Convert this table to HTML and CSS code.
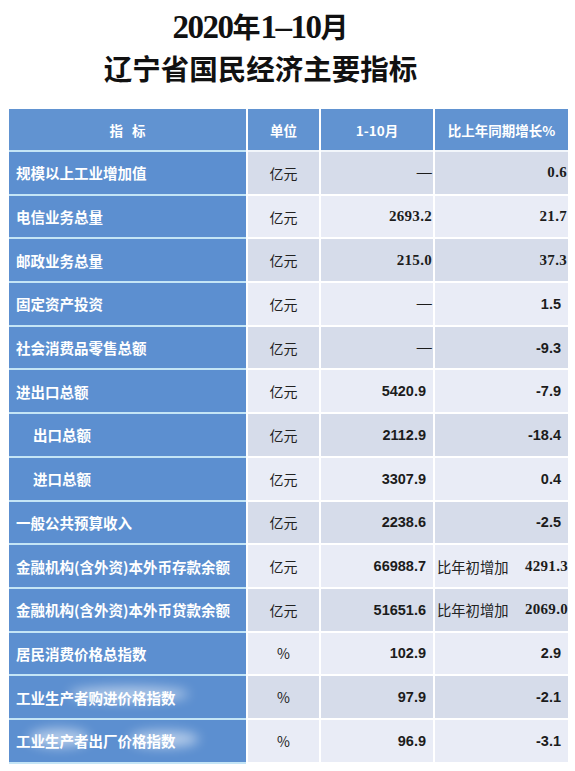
FILE: index.html
```html
<!DOCTYPE html>
<html lang="zh-CN">
<head>
<meta charset="utf-8">
<title>2020年1-10月辽宁省国民经济主要指标</title>
<link rel="stylesheet" href="styles.css">
</head>
<body>
<h1 class="title"><span class="t1"><span class="num">2020</span>年<span class="num">1–10</span>月</span><span class="t2">辽宁省国民经济主要指标</span></h1>
<div class="table">
  <div class="hd">指&nbsp;&nbsp;&nbsp;标</div><div class="hd">单位</div><div class="hd">1-10月</div><div class="hd">比上年同期增长%</div>

  <div class="name">规模以上工业增加值</div><div class="unit dk">亿元</div><div class="v dk serif">—</div><div class="g dk serif">0.6</div>
  <div class="name">电信业务总量</div><div class="unit lt">亿元</div><div class="v lt serif">2693.2</div><div class="g lt serif">21.7</div>
  <div class="name">邮政业务总量</div><div class="unit dk">亿元</div><div class="v dk serif">215.0</div><div class="g dk serif">37.3</div>
  <div class="name">固定资产投资</div><div class="unit lt">亿元</div><div class="v lt serif">—</div><div class="g lt">1.5</div>
  <div class="name">社会消费品零售总额</div><div class="unit dk">亿元</div><div class="v dk serif">—</div><div class="g dk">-9.3</div>
  <div class="name">进出口总额</div><div class="unit lt">亿元</div><div class="v lt">5420.9</div><div class="g lt">-7.9</div>
  <div class="name sub">出口总额</div><div class="unit dk">亿元</div><div class="v dk">2112.9</div><div class="g dk">-18.4</div>
  <div class="name sub">进口总额</div><div class="unit lt">亿元</div><div class="v lt">3307.9</div><div class="g lt">0.4</div>
  <div class="name">一般公共预算收入</div><div class="unit dk">亿元</div><div class="v dk">2238.6</div><div class="g dk">-2.5</div>
  <div class="name">金融机构(含外资)本外币存款余额</div><div class="unit lt">亿元</div><div class="v lt">66988.7</div><div class="g lt split"><span class="lbl">比年初增加</span><span class="serifnum">4291.3</span></div>
  <div class="name">金融机构(含外资)本外币贷款余额</div><div class="unit dk">亿元</div><div class="v dk">51651.6</div><div class="g dk split"><span class="lbl">比年初增加</span><span class="serifnum">2069.0</span></div>
  <div class="name">居民消费价格总指数</div><div class="unit lt">%</div><div class="v lt">102.9</div><div class="g lt">2.9</div>
  <div class="name">工业生产者购进价格指数</div><div class="unit dk">%</div><div class="v dk">97.9</div><div class="g dk">-2.1</div>
  <div class="name">工业生产者出厂价格指数</div><div class="unit lt">%</div><div class="v lt">96.9</div><div class="g lt">-3.1</div>

  <div class="smudge s1"></div>
  <div class="smudge s2"></div>
  <div class="smudge s3"></div>
</div>
</body>
</html>
```
FILE: styles.css
```css
html, body {
  margin: 0;
  padding: 0;
  background: #ffffff;
}
body {
  width: 575px;
  height: 771px;
  overflow: hidden;
  font-family: "Noto Sans CJK SC", "Liberation Sans", sans-serif;
}
.title {
  margin: 0;
  padding: 6px 54px 0 0;
  text-align: center;
  font-weight: 700;
  color: #111;
}
.title .t1,
.title .t2 {
  display: block;
  height: 41px;
  line-height: 41px;
}
.title .t1 {
  font-size: 28px;
  font-family: "Noto Sans CJK SC", sans-serif;
}
.title .t1 .num {
  font-family: "Liberation Serif", serif;
  font-size: 33px;
  letter-spacing: -1.5px;
}
.title .t2 {
  font-size: 28.5px;
  font-family: "Noto Sans CJK SC", sans-serif;
}
.table {
  position: relative;
  display: grid;
  grid-template-columns: 237px 71px 112px 133px;
  grid-template-rows: 41px repeat(14, 41.7px);
  column-gap: 2px;
  row-gap: 2px;
  width: 559px;
  margin: 21px 0 0 9px;
}
.table > div {
  display: flex;
  align-items: center;
  box-sizing: border-box;
}
.hd {
  background: #6193d1;
  color: #ffffff;
  font-weight: 700;
  font-size: 13.5px;
  justify-content: center;
  box-shadow: 0 2px 0 #f2f6fb;
}
.hd:first-child {
  box-shadow: 0 2px 0 #c4e5f6;
}
.name {
  background: #5c8fd0;
  color: #ffffff;
  font-weight: 700;
  font-size: 14.5px;
  padding-left: 7px;
  box-shadow: 0 2px 0 #c4e5f6;
  white-space: nowrap;
}
.name.sub {
  padding-left: 24px;
}
.dk {
  background: #d6dcea;
}
.lt {
  background: #e9ecf6;
}
.unit {
  justify-content: center;
  font-size: 14px;
  color: #222;
}
.v, .g {
  justify-content: flex-end;
  font-family: "Liberation Sans", Arial, sans-serif;
  font-weight: 700;
  font-size: 14.5px;
  color: #1c1c1c;
  padding-right: 7px;
}
.v.serif, .g.serif {
  font-family: "Liberation Serif", serif;
  font-size: 15px;
  padding-right: 1px;
  letter-spacing: 0.3px;
}
.g.split {
  justify-content: space-between;
  padding-left: 2px;
  padding-right: 0;
}
.g.split .lbl {
  font-family: "Noto Sans CJK SC", sans-serif;
  font-weight: 400;
  font-size: 14.3px;
  color: #222;
}
.g.split .serifnum {
  font-family: "Liberation Serif", serif;
  font-size: 15px;
  letter-spacing: 0.3px;
}
.smudge {
  position: absolute;
  background: rgba(255, 255, 255, 0.55);
  border-radius: 50%;
  filter: blur(6px);
}
.s1 {
  left: 60px;
  top: 578px;
  width: 120px;
  height: 14px;
}
.s2 {
  left: 20px;
  top: 620px;
  width: 60px;
  height: 18px;
}
.s3 {
  left: 120px;
  top: 622px;
  width: 70px;
  height: 16px;
}
```
